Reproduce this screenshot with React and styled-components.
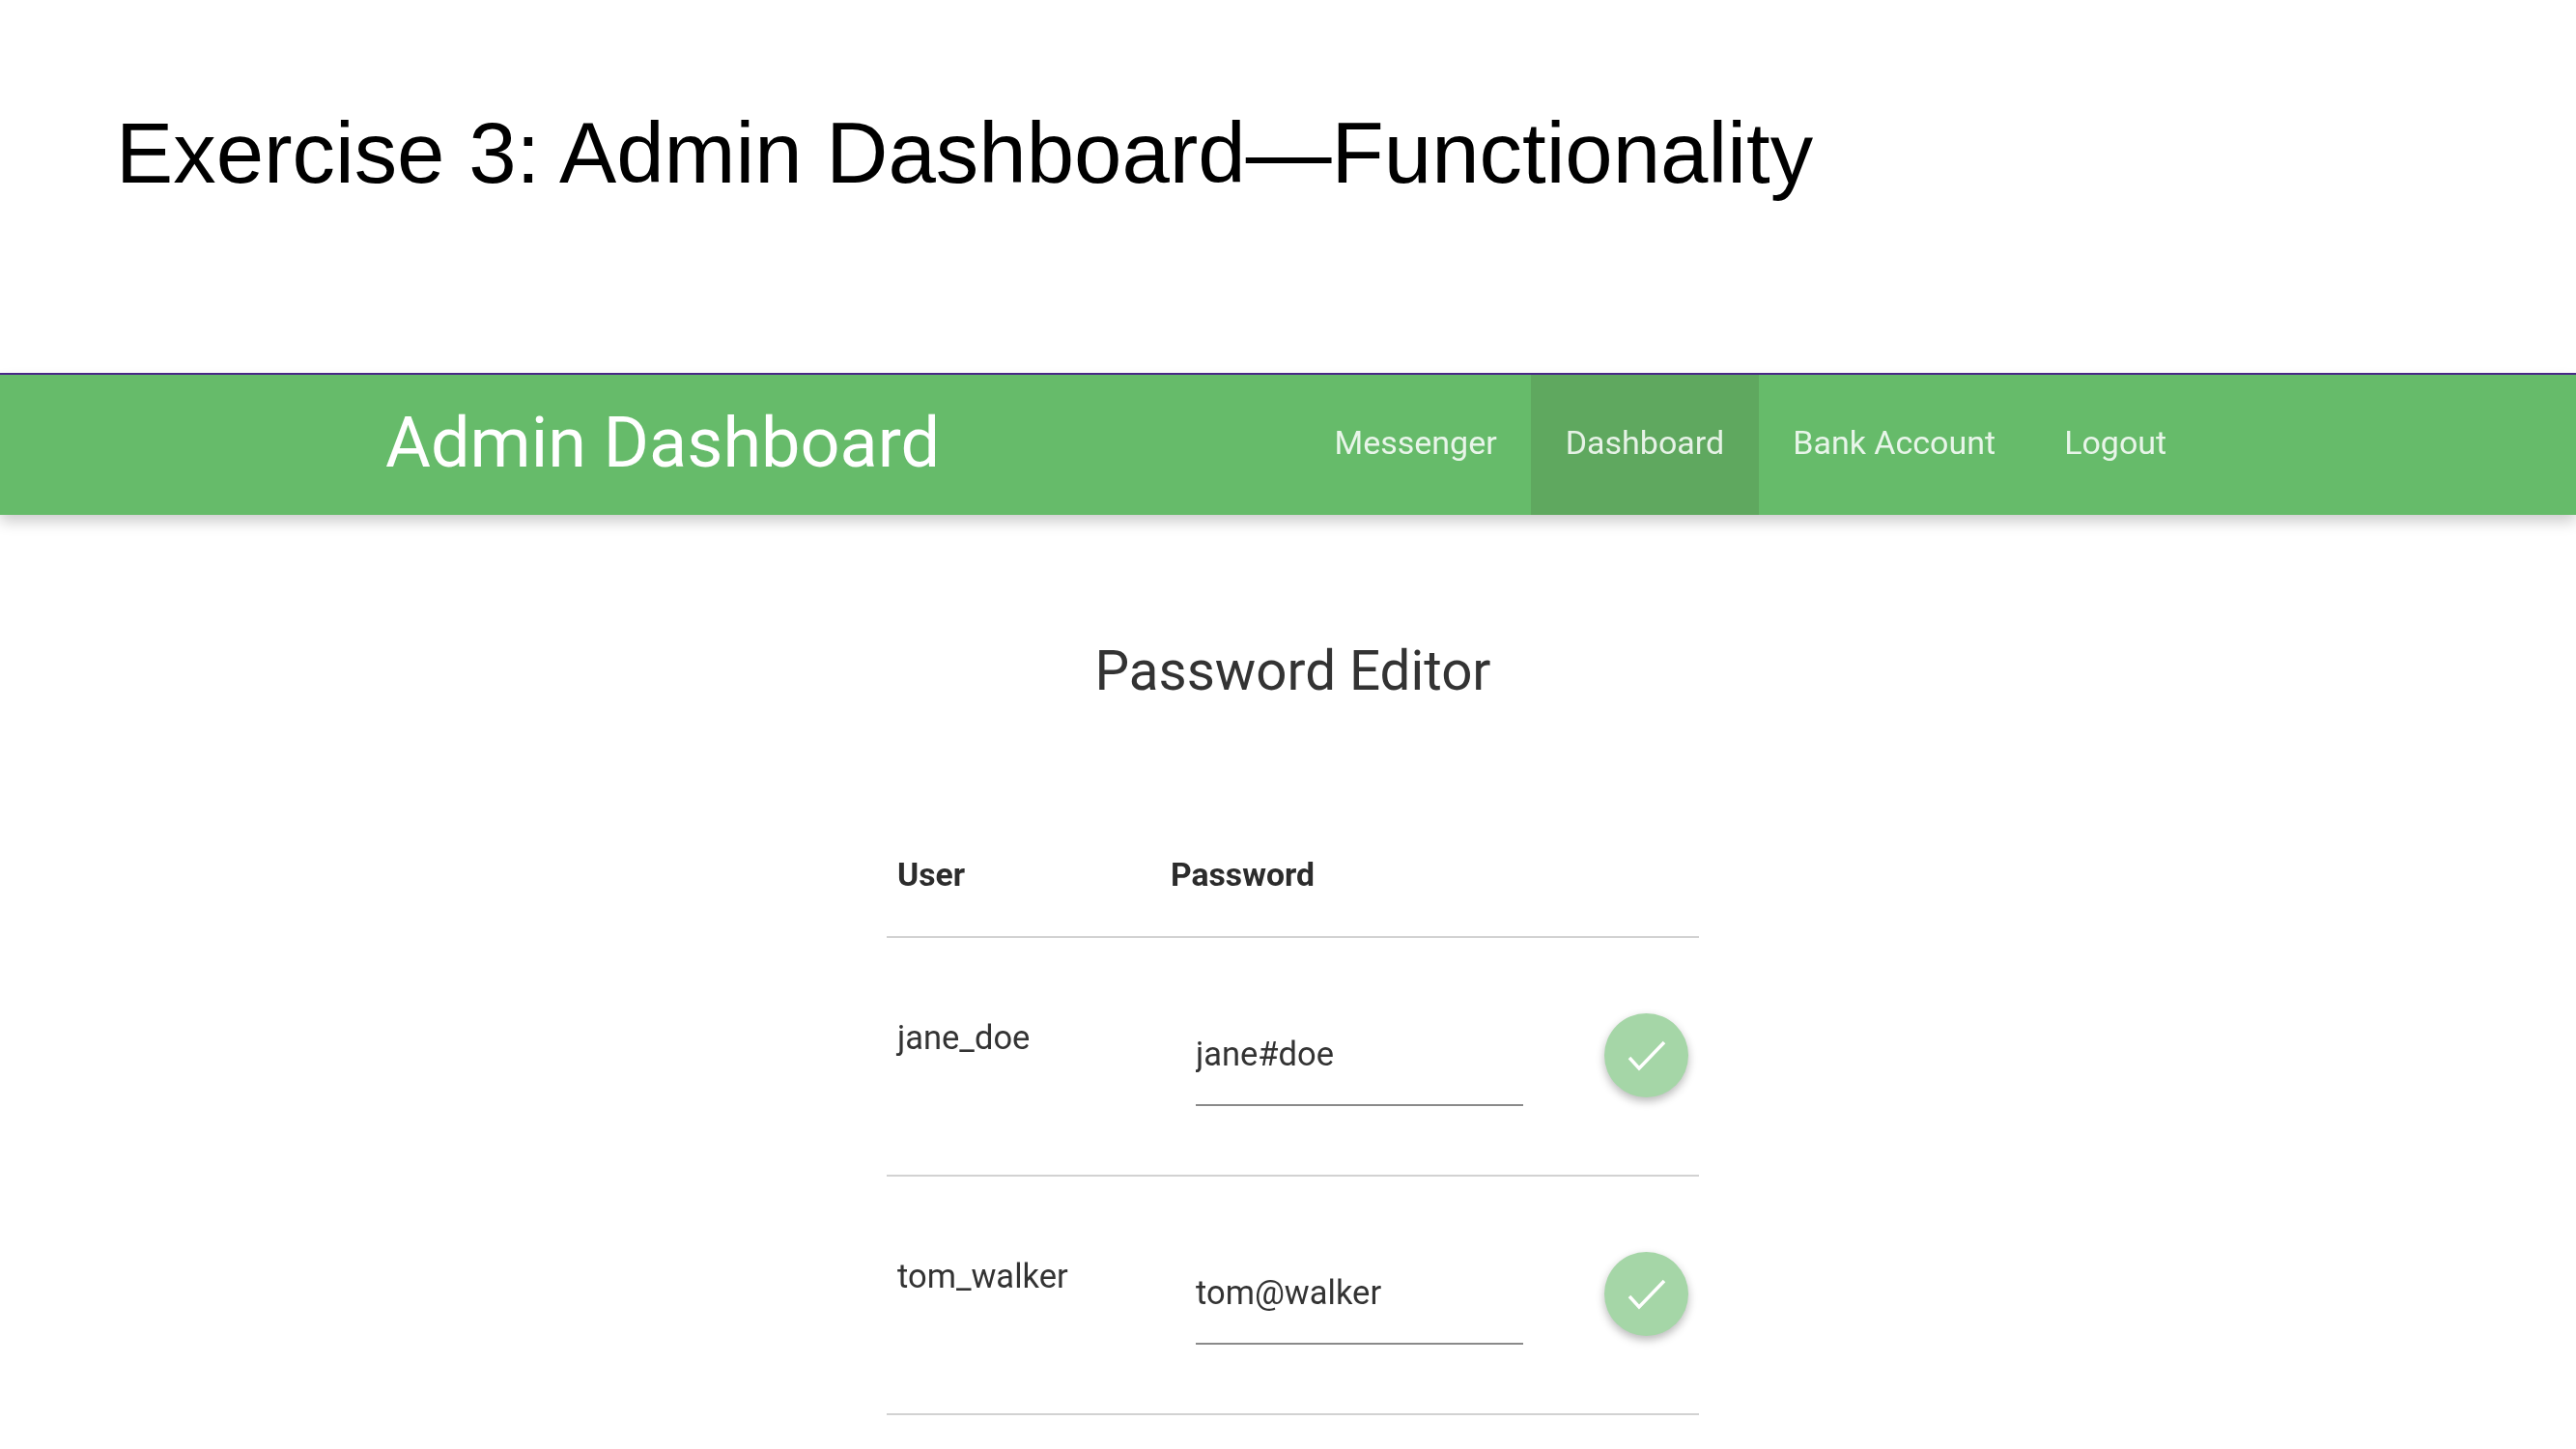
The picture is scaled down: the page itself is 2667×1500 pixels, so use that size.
import React from "react";
import styled, { createGlobalStyle } from "styled-components";

const GlobalStyle = createGlobalStyle`
  html, body {
    margin: 0;
    height: 1500px;
    overflow: hidden;
    background: #fff;
  }
`;

const Slide = styled.div`
  width: 2667px;
  height: 1500px;
  overflow: hidden;
`;

const SlideHeader = styled.header`
  height: 386px;
  box-sizing: border-box;
  padding: 107px 0 0 120px;
`;

const SlideTitle = styled.h1`
  margin: 0;
  font: 400 88.8px/103px "Liberation Sans", Arial, sans-serif;
  color: #000;
`;

const Shot = styled.div`
  border-top: 2px solid #4a2a8a;
  font-family: Roboto, sans-serif;
`;

const ShotBody = styled.div`
  filter: blur(0.6px);
`;

const NavBar = styled.nav`
  height: 145px;
  background: #66bb6a;
  box-shadow: 0 7px 14px rgba(0, 0, 0, 0.2);
  display: flex;
  align-items: stretch;
  padding-left: 399px;
`;

const Brand = styled.div`
  width: 947px;
  font-size: 72px;
  font-weight: 400;
  line-height: 142px;
  color: #fff;
`;

const NavItem = styled.a`
  padding: 0 35.5px;
  font-size: 34px;
  line-height: 140px;
  color: ${(p) => (p.$active ? "#e6f2e6" : "#e8f5e9")};
  background: ${(p) => (p.$active ? "#5fa85f" : "transparent")};
`;

const Content = styled.main`
  display: flex;
  flex-direction: column;
  align-items: center;
`;

const PageTitle = styled.h2`
  margin: 0 0 0 10px;
  padding: 127px 0 0;
  height: 320px;
  box-sizing: border-box;
  font-size: 56.5px;
  font-weight: 400;
  line-height: 70px;
  color: #333;
`;

const Table = styled.div`
  width: 841px;
  margin-left: 10px;
`;

const HeadRow = styled.div`
  display: grid;
  grid-template-columns: 283px 1fr;
  height: 118px;
  box-sizing: border-box;
  border-bottom: 2px solid #d2d2d2;
  padding: 33px 0 0 11px;
  font-size: 33.7px;
  font-weight: 700;
  line-height: 40px;
  color: #2c2c2c;
`;

const Row = styled.div`
  display: grid;
  grid-template-columns: 309px 339px 1fr;
  height: 247px;
  box-sizing: border-box;
  border-bottom: 2px solid #d2d2d2;
  padding-left: 11px;
  color: #333;
  font-size: 34.5px;
`;

const UserCell = styled.div`
  padding-top: 83px;
  line-height: 40px;
`;

const PasswordInput = styled.input`
  align-self: start;
  width: 339px;
  height: 96px;
  margin-top: 78px;
  padding: 0 0 10px;
  box-sizing: border-box;
  border: 0;
  border-bottom: 2px solid #8a8a8a;
  outline: 0;
  background: transparent;
  font: 400 34.5px/40px Roboto, sans-serif;
  color: #333;
`;

const ConfirmButton = styled.button`
  align-self: start;
  justify-self: end;
  width: 87px;
  height: 87px;
  margin: 78px 11px 0 0;
  padding: 0;
  border: 0;
  border-radius: 50%;
  background: #a5d6a7;
  box-shadow: 0 4px 10px rgba(0, 0, 0, 0.28);
  display: flex;
`;

const CheckIcon = () => (
  <svg width="87" height="87" viewBox="0 0 87 87" fill="none">
    <path d="M26 46 L36 57 L62 30" stroke="#fff" strokeWidth="3.5" />
  </svg>
);

const users = [
  { name: "jane_doe", password: "jane#doe" },
  { name: "tom_walker", password: "tom@walker" },
];

export default function App() {
  return (
    <Slide>
      <GlobalStyle />
      <SlideHeader>
        <SlideTitle>Exercise 3: Admin Dashboard—Functionality</SlideTitle>
      </SlideHeader>
      <Shot>
        <ShotBody>
          <NavBar>
            <Brand>Admin Dashboard</Brand>
            <NavItem>Messenger</NavItem>
            <NavItem $active>Dashboard</NavItem>
            <NavItem>Bank Account</NavItem>
            <NavItem>Logout</NavItem>
          </NavBar>
          <Content>
            <PageTitle>Password Editor</PageTitle>
            <Table>
              <HeadRow>
                <div>User</div>
                <div>Password</div>
              </HeadRow>
              {users.map((u) => (
                <Row key={u.name}>
                  <UserCell>{u.name}</UserCell>
                  <PasswordInput defaultValue={u.password} />
                  <ConfirmButton>
                    <CheckIcon />
                  </ConfirmButton>
                </Row>
              ))}
            </Table>
          </Content>
        </ShotBody>
      </Shot>
    </Slide>
  );
}
